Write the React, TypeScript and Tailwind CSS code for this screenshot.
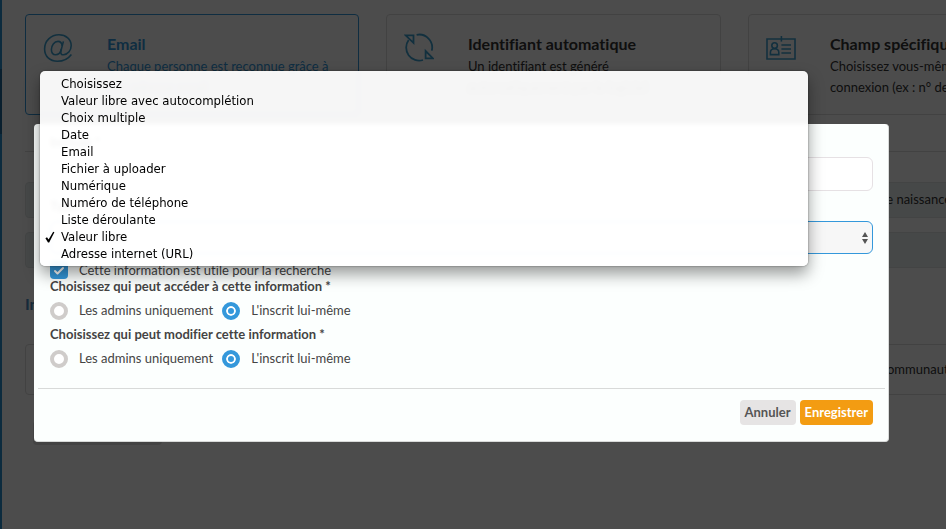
import { useState } from "react";
import { Check } from "lucide-react";

const fieldTypes = [
  "Choisissez",
  "Valeur libre avec autocomplétion",
  "Choix multiple",
  "Date",
  "Email",
  "Fichier à uploader",
  "Numérique",
  "Numéro de téléphone",
  "Liste déroulante",
  "Valeur libre",
  "Adresse internet (URL)",
];

const AtIcon = () => (
  <svg width="30" height="30" viewBox="0 0 30 30" fill="none" stroke="currentColor" strokeWidth="1.6">
    <path d="M20.4 8.4 L18 17.6 C17.2 20.8 18.6 22 20.6 21.8 C25 21.4 28.2 17.4 28.2 12.6 C28.2 6.2 23 1.8 16 1.8 C7.8 1.8 1.6 8 1.6 16 C1.6 23.4 6.8 28.2 14.4 28.2 C19.8 28.2 25 26 28.4 21.4" />
    <path d="M19.2 12.8 C18.8 10 17.4 8.4 15 8.4 C11.2 8.4 8.4 12.4 8.4 16.6 C8.4 19.8 10 21.8 12.6 21.8 C15.6 21.8 17.6 19.4 18.4 16" />
  </svg>
);

const SyncIcon = () => (
  <svg width="30" height="30" viewBox="0 0 30 30" fill="none" stroke="currentColor" strokeWidth="1.8">
    <path d="M12.6 1.8 A13 13 0 0 1 27.8 17.6" />
    <path d="M19 27 A13 13 0 0 1 4.6 7" />
    <path d="M1.7 2.4 L9.5 2.4 L9.5 9.8 Z" />
    <path d="M21.6 18 L29 25.4 L21.6 25.4 Z" />
  </svg>
);

const CardIcon = () => (
  <svg width="30" height="30" viewBox="0 0 30 30" fill="none" stroke="currentColor" strokeWidth="1.6">
    <path d="M1 6 H29 V26 H1 Z" />
    <path d="M15.4 3 V8.6" />
    <circle cx="8.6" cy="12.6" r="2.8" />
    <path d="M4.4 21.6 V19.6 C4.4 17 6 15.8 8.6 15.8 C11.2 15.8 12.8 17 12.8 19.6 V21.6 Z" />
    <path d="M15.4 12 H25 M15.4 16 H25 M15.4 20 H25" />
  </svg>
);

const modes = [
  { icon: AtIcon, title: "Email", lines: ["Chaque personne est reconnue grâce à", "son adresse email"], active: true },
  { icon: SyncIcon, title: "Identifiant automatique", lines: ["Un identifiant est généré", "automatiquement par le logiciel"], active: false },
  { icon: CardIcon, title: "Champ spécifique", lines: ["Choisissez vous-même l'identifiant de", "connexion (ex : n° de licence)"], active: false },
];

const rights = [
  { name: "access", label: "Choisissez qui peut accéder à cette information *" },
  { name: "edit", label: "Choisissez qui peut modifier cette information *" },
];

const radioClass =
  "appearance-none w-[18px] h-[18px] shrink-0 rounded-full border-4 border-[#cfccca] bg-white checked:border-[#3498db] checked:bg-[#3498db] checked:shadow-[inset_0_0_0_2px_#fff]";

function BackgroundPage() {
  return (
    <div className="flex h-screen overflow-hidden bg-white">
      <aside className="flex flex-col w-[2px] shrink-0 bg-[#2a8fd0]">
        <div className="mt-[69px] h-[65px] bg-[#20699b]" />
      </aside>
      <main className="flex-1 overflow-hidden pl-[23px] pt-[14px] text-[13px] text-[#333]">
        <div className="min-w-max">
          <div className="flex gap-[27px]">
            {modes.map(({ icon: Icon, title, lines, active }) => (
              <section
                key={title}
                className={
                  active
                    ? "flex w-[334px] h-[101px] shrink-0 rounded border border-[#3498db] pl-[17px] pt-[18px] text-[#3498db]"
                    : "flex w-[335px] h-[101px] shrink-0 rounded border border-[#dcdcdc] pl-[17px] pt-[18px]"
                }
              >
                <div className="w-16 shrink-0 text-[#3fa0d0]">
                  <Icon />
                </div>
                <div className="whitespace-nowrap leading-[21px]">
                  <h2 className="mb-px text-[16px] font-bold leading-[22px]">{title}</h2>
                  {lines.map((line) => (
                    <p key={line}>{line}</p>
                  ))}
                </div>
              </section>
            ))}
          </div>

          <hr className="mt-9 border-[#dcdcdc]" />

          <div className="mt-[30px] flex items-center h-9 rounded border border-[#dfe4e4] bg-[#ecf2f1] pl-[18px]">
            <span className="w-[268px]">Nom</span>
            <span className="w-[268px]">Prénom</span>
            <span className="w-[268px]">Email</span>
            <span>Date de naissance</span>
          </div>
          <div className="mt-[14px] h-9 rounded border border-[#dfe4e4] bg-[#ecf2f1]" />

          <h3 className="mt-6 text-[16px] font-bold leading-6 text-[#4a8cc0]">Informations</h3>

          <div className="mt-7 flex items-center h-[51px] rounded border border-[#dcdcdc] pl-[18px]">
            <span className="w-[268px]">Nom</span>
            <span className="w-[268px]">Adresse</span>
            <span className="w-[268px]">Ville</span>
            <span>De la communauté</span>
          </div>

          <div className="ml-2 mt-[26px] w-[129px] h-6 rounded bg-[#e2e2e2]" />
        </div>
      </main>
    </div>
  );
}

export default function App() {
  const [type, setType] = useState("Valeur libre");
  const [name, setName] = useState("");

  return (
    <div className="font-[Lato,sans-serif] [font-variant-ligatures:none]">
      <BackgroundPage />

      <div className="fixed inset-0 bg-black/70 pt-[124px] pl-[34px] pr-[57px]">
        <form className="rounded border-b border-r border-[#d8dad9] bg-[#fcfffe] pl-4 pr-[15px] pt-[11px] pb-4 text-[13px] leading-[15px] text-[#444]">
          <label htmlFor="name" className="block font-bold">Intitulé *</label>
          <input
            id="name"
            value={name}
            onChange={(e) => setName(e.target.value)}
            className="mt-[7px] block w-full h-[34px] rounded-md border border-[#e6e1e4] bg-white px-3"
          />

          <label htmlFor="type" className="mt-2 block font-bold">Type *</label>
          <div className="relative mt-[7px]">
            <select
              id="type"
              value={type}
              onChange={(e) => setType(e.target.value)}
              className="block w-full h-[33px] appearance-none rounded-md border border-[#3498db] bg-[#f7f7f7] px-3"
            >
              {fieldTypes.map((t) => (
                <option key={t}>{t}</option>
              ))}
            </select>
            <svg width="6" height="12" viewBox="0 0 6 12" fill="#555" className="absolute right-[5px] top-[11px]">
              <path d="M3 0 L6 5 H0 Z M3 12 L0 7 H6 Z" />
            </svg>

            {/* Open list */}
            <ul
              role="listbox"
              className="absolute z-10 -left-[10px] right-[65px] -bottom-3 rounded-[5px] bg-white/95 py-1 font-['DejaVu_Sans_Condensed','DejaVu_Sans',sans-serif] text-[13px] leading-[17px] text-black shadow-[0_8px_16px_rgba(0,0,0,0.4),0_0_2px_rgba(0,0,0,0.5)] backdrop-blur-[2px]"
            >
              {fieldTypes.map((t) => (
                <li
                  key={t}
                  role="option"
                  aria-selected={t === type}
                  onClick={() => setType(t)}
                  className="flex items-center pl-[5px]"
                >
                  <span className="w-4 shrink-0">
                    {t === type && (
                      <svg width="10" height="12" viewBox="0 0 10 12">
                        <path d="M0.4 7.2 L2 6.2 L3.6 8.4 L8.2 0.8 L9.4 1.2 L4.2 11.4 L3 11.4 Z" />
                      </svg>
                    )}
                  </span>
                  {t}
                </li>
              ))}
            </ul>
          </div>

          <label className="mt-[7px] flex items-center gap-[11px] h-[18px]">
            <span className="relative flex">
              <input type="checkbox" defaultChecked className="appearance-none w-[18px] h-[18px] rounded bg-[#3498db]" />
              <Check size={12} strokeWidth={4} color="white" className="absolute left-[3px] top-[4px]" />
            </span>
            Cette information est utile pour la recherche
          </label>

          {rights.map(({ name, label }) => (
            <fieldset key={name}>
              <legend className="font-bold">{label}</legend>
              <div className="flex items-center gap-[9px] h-[33px]">
                <label className="flex items-center gap-[11px]">
                  <input type="radio" name={name} className={radioClass} />
                  Les admins uniquement
                </label>
                <label className="flex items-center gap-[11px]">
                  <input type="radio" name={name} defaultChecked className={radioClass} />
                  L'inscrit lui-même
                </label>
              </div>
            </fieldset>
          ))}

          <hr className="mt-[13px] -mx-3 border-[#d8dad9]" />

          <div className="mt-[11px] flex justify-end gap-1 font-bold">
            <button type="button" className="h-[25px] rounded px-[5px] bg-[#e6e4e4] text-[#555]">Annuler</button>
            <button type="submit" className="h-[25px] rounded px-[5px] bg-[#f39c12] text-white">Enregistrer</button>
          </div>
        </form>
      </div>
    </div>
  );
}
